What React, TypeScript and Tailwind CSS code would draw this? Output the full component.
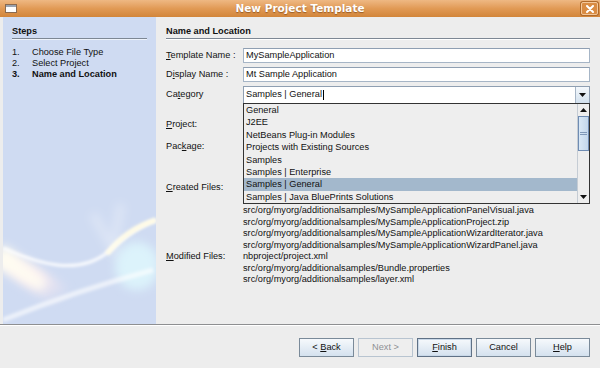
import React from "react";

// mnemonic label: underline one letter, Swing style
function Mn({ text, at }: { text: string; at: number }) {
  return (
    <>
      {text.slice(0, at)}
      <span className="underline underline-offset-1">{text[at]}</span>
      {text.slice(at + 1)}
    </>
  );
}

const categories = [
  "General",
  "J2EE",
  "NetBeans Plug-in Modules",
  "Projects with Existing Sources",
  "Samples",
  "Samples | Enterprise",
  "Samples | General",
  "Samples | Java BluePrints Solutions",
];

// the first two created files sit under the open combo popup
const createdFiles = [
  "src/org/myorg/additionalsamples/MySampleApplicationPanelVisual.java",
  "src/org/myorg/additionalsamples/MySampleApplicationProject.zip",
  "src/org/myorg/additionalsamples/MySampleApplicationWizardIterator.java",
  "src/org/myorg/additionalsamples/MySampleApplicationWizardPanel.java",
];

const modifiedFiles = [
  "nbproject/project.xml",
  "src/org/myorg/additionalsamples/Bundle.properties",
  "src/org/myorg/additionalsamples/layer.xml",
];

function TitleBar() {
  return (
    <div className="relative h-[17px] shrink-0 flex items-center justify-center bg-gradient-to-b from-[#eeb883] via-[#e19a55] to-[#d2853a]">
      <div className="absolute left-[5px] top-[4px] w-[12px] h-[9px] border border-[#8a6a50] bg-white">
        <div className="h-[2px] bg-[#9aa3b0]" />
      </div>
      <span className="text-white font-bold text-[10.5px] font-['DejaVu_Sans',sans-serif] [text-shadow:0_1px_1px_rgba(90,40,0,0.5)]">
        New Project Template
      </span>
      <div className="absolute right-[2px] top-[2px] w-[17px] h-[13px] border border-[#f3c79a] rounded-[2px] bg-[#d98c44] shadow-[0_0_0_1px_#b06a2a] flex items-center justify-center">
        <svg width="8" height="8" viewBox="0 0 8 8">
          <path d="M1 1 L7 7 M7 1 L1 7" stroke="white" strokeWidth="2" strokeLinecap="round" />
        </svg>
      </div>
    </div>
  );
}

function Swoosh() {
  return (
    <svg className="absolute left-0 bottom-0" width="153" height="150" viewBox="0 0 153 150">
      <defs>
        <filter id="b6" x="-50%" y="-50%" width="200%" height="200%">
          <feGaussianBlur stdDeviation="5" />
        </filter>
        <filter id="b2" x="-50%" y="-50%" width="200%" height="200%">
          <feGaussianBlur stdDeviation="1.4" />
        </filter>
        <linearGradient id="band" x1="0" y1="0" x2="1" y2="1">
          <stop offset="0" stopColor="#fffdf0" stopOpacity="1" />
          <stop offset="0.55" stopColor="#fff0f0" stopOpacity="0.95" />
          <stop offset="1" stopColor="#fbe6f0" stopOpacity="0" />
        </linearGradient>
      </defs>
      <ellipse cx="134" cy="92" rx="22" ry="24" fill="#dcf3fb" filter="url(#b6)" />
      <path d="M-6 80 L60 124" stroke="url(#band)" strokeWidth="22" filter="url(#b6)" />
      <path d="M-2 84 L40 112" stroke="#fffdf2" strokeWidth="10" filter="url(#b6)" />
      <path d="M0 146 C40 130 90 112 150 96" stroke="#ffffff" strokeOpacity="0.6" strokeWidth="5" fill="none" filter="url(#b2)" />
      <path d="M0 74 C35 90 75 102 105 78 C118 66 135 52 153 46" stroke="#ffffff" strokeOpacity="0.9" strokeWidth="3" fill="none" filter="url(#b2)" />
      <path d="M104 80 C116 64 134 52 153 46" stroke="#fffbe6" strokeWidth="5" fill="none" filter="url(#b2)" />
      <path d="M90 40 L110 75 L118 30" stroke="#ffffff" strokeOpacity="0.3" strokeWidth="8" fill="none" filter="url(#b6)" />
    </svg>
  );
}

function StepsPanel() {
  return (
    <div className="relative ml-[3px] w-[153px] bg-[#cfdbf2] overflow-hidden">
      <Swoosh />
      <div className="relative pt-[9px] pl-[9px] pr-[9px]">
        <div className="font-bold leading-[11px]">Steps</div>
        <div className="mt-[1px] h-px bg-[#7d8794]" />
        <div className="h-px bg-[#eef3fb]" />
        <div className="mt-[7px] leading-[11px]">
          <div className="flex"><span className="w-[20px]">1.</span>Choose File Type</div>
          <div className="flex"><span className="w-[20px]">2.</span>Select Project</div>
          <div className="flex font-bold"><span className="w-[20px]">3.</span>Name and Location</div>
        </div>
      </div>
    </div>
  );
}

function TextField({ value }: { value?: string }) {
  return (
    <div className="flex-1 h-[15px] border border-[#a6b5c6] border-t-[#8f9fb2] bg-white flex items-center px-[2px] leading-none whitespace-nowrap overflow-hidden">
      {value}
    </div>
  );
}

function Arrow({ up }: { up?: boolean }) {
  return (
    <svg width="7" height="4" viewBox="0 0 7 4">
      <path d={up ? "M0 4 L3.5 0 L7 4 Z" : "M0 0 L7 0 L3.5 4 Z"} fill="#111" />
    </svg>
  );
}

function CategoryPopup() {
  return (
    <div className="absolute left-[-1px] right-[-1px] top-full h-[101px] border border-[#333] bg-[#eeeeee] flex z-10">
      <div className="flex-1 overflow-hidden">
        {categories.map(c => (
          <div
            key={c}
            className={`h-[12.4px] leading-[12.4px] pl-[2px] whitespace-nowrap ${c === "Samples | General" ? "bg-[#a3b8cc]" : ""}`}
          >
            {c}
          </div>
        ))}
      </div>
      <div className="w-[12px] border-l border-[#c5ccd4] flex flex-col bg-[#eeeeee]">
        <div className="h-[12px] flex items-center justify-center">
          <Arrow up />
        </div>
        <div className="h-[35px] border border-[#6f8cb3] bg-gradient-to-r from-[#d9e8f6] to-[#c3d7ec] flex flex-col items-center justify-center gap-[1px]">
          <div className="w-[7px] h-px bg-[#7f98b8]" />
          <div className="w-[7px] h-px bg-[#7f98b8]" />
        </div>
        <div className="flex-1" />
        <div className="h-[12px] flex items-center justify-center">
          <Arrow />
        </div>
      </div>
    </div>
  );
}

function ContentPanel() {
  return (
    <div className="flex-1 pl-[10px] pr-[10px] pt-[9px]">
      <div className="font-bold leading-[11px]">Name and Location</div>
      <div className="mt-[1px] h-px bg-[#7d8794]" />
      <div className="h-px bg-white" />

      <div className="mt-[8px] flex flex-col gap-[4px]">
        <div className="flex items-center">
          <div className="w-[77px]"><Mn text="Template Name :" at={0} /></div>
          <TextField value="MySampleApplication" />
        </div>
        <div className="flex items-center">
          <div className="w-[77px]"><Mn text="Display Name :" at={1} /></div>
          <TextField value="Mt Sample Application" />
        </div>
        <div className="flex items-center">
          <div className="w-[77px]"><Mn text="Category" at={2} /></div>
          <div className="relative flex-1 h-[18px] border border-[#8f9fb2] bg-white flex">
            <div className="flex-1 flex items-center px-[2px] whitespace-nowrap">
              Samples | General<span className="inline-block w-px h-[10px] bg-black ml-px" />
            </div>
            <div className="w-[14px] border-l border-[#a6b5c6] bg-gradient-to-b from-[#f4f8fc] to-[#d3e1ee] flex items-center justify-center">
              <Arrow />
            </div>
            <CategoryPopup />
          </div>
        </div>
      </div>

      <div className="mt-[13px] flex items-center">
        <div className="w-[77px]"><Mn text="Project:" at={0} /></div>
        <TextField />
      </div>
      <div className="mt-[6px] flex items-center">
        <div className="w-[77px]"><Mn text="Package:" at={3} /></div>
        <div className="flex-1 h-[17px] border border-[#8f9fb2] bg-white" />
      </div>

      <div className="mt-[27px] leading-[11.5px]">
        <div className="flex">
          <div className="w-[77px]"><Mn text="Created Files:" at={0} /></div>
          <div className="whitespace-nowrap pt-[23px]">
            {createdFiles.map(f => <div key={f}>{f}</div>)}
          </div>
        </div>
        <div className="flex">
          <div className="w-[77px]"><Mn text="Modified Files:" at={0} /></div>
          <div className="whitespace-nowrap">
            {modifiedFiles.map(f => <div key={f}>{f}</div>)}
          </div>
        </div>
      </div>
    </div>
  );
}

function WizardButton({ children, primary, disabled }: { children: React.ReactNode; primary?: boolean; disabled?: boolean }) {
  const look = disabled
    ? "border-[#b8c4d0] bg-[#eeeeee] text-[#8e9094]"
    : primary
      ? "border-[#5f7186] bg-gradient-to-b from-[#f6f9fc] to-[#d4e1ee] shadow-[inset_0_0_0_1px_#c9d8e8]"
      : "border-[#7a8a99] bg-gradient-to-b from-[#f6f9fc] to-[#d4e1ee]";
  return (
    <div className={`w-[55px] h-[19px] border flex items-center justify-center whitespace-pre ${look}`}>
      {children}
    </div>
  );
}

export default function App() {
  return (
    <div className="w-[600px] h-[368px] bg-[#ededed] flex flex-col overflow-hidden font-['Liberation_Sans',sans-serif] text-[9.2px] text-[#111]">
      <TitleBar />
      <div className="flex h-[307px] shrink-0">
        <StepsPanel />
        <ContentPanel />
      </div>
      <div className="h-px bg-[#8e8f91] shrink-0" />
      <div className="h-px bg-white shrink-0" />
      <div className="flex justify-end gap-[4px] pr-[10px] pt-[12px]">
        <WizardButton>{"< "}<Mn text="Back" at={0} /></WizardButton>
        <WizardButton disabled>Next &gt;</WizardButton>
        <WizardButton primary><Mn text="Finish" at={0} /></WizardButton>
        <WizardButton>Cancel</WizardButton>
        <WizardButton><Mn text="Help" at={0} /></WizardButton>
      </div>
    </div>
  );
}
